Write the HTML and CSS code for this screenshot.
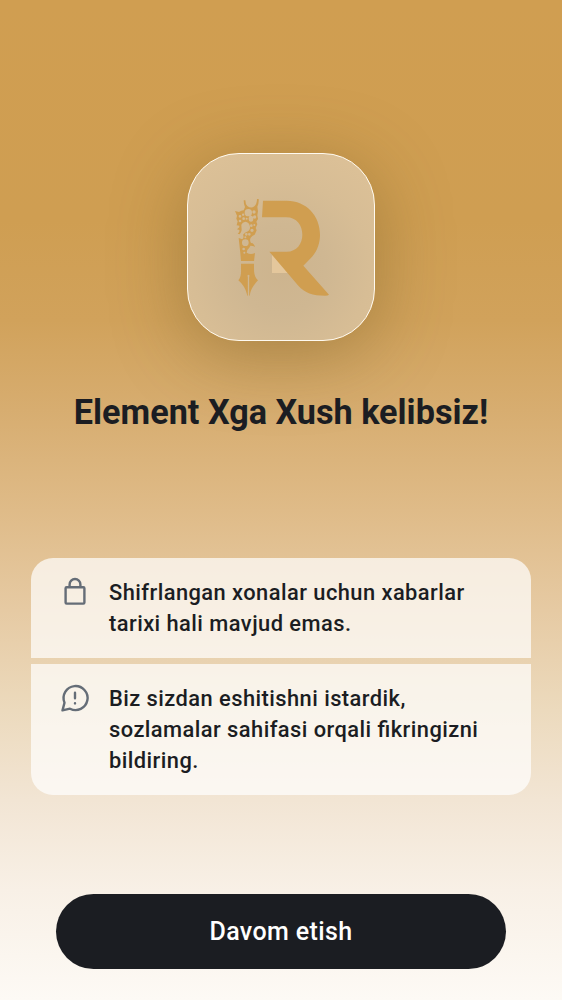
FILE: index.html
```html
<!DOCTYPE html>
<html lang="uz">
<head>
<meta charset="utf-8">
<title>Element X</title>
<link rel="stylesheet" href="styles.css">
</head>
<body>
<main class="screen">
  <div class="logo-tile">
    <svg class="logo" viewBox="171 159 564 564" aria-hidden="true">
      <path class="fold" d="M426 464V519H474V510Z"/>
      <path class="gold" d="M399 302H470C530 302 570 348 570 404C570 432 560 456 542 475L520 497L597 584Q594 587 585 587C548 587 524 578 505 557L418 455H470C500 455 517 431 517 404C517 376 500 352 469 352H396Z"/>
      <path class="gold" d="M333 491H372V506C372 524 376 532 384 541C369 557 362 570 359 587H357.500V530A3 3 0 1 0 353.500 530V587H352C347 567 341 556 325 541C332 532 334 521 333 506Z"/>
      <path class="gold" fill-rule="evenodd" d="M326 414L337 418Q343 412 339 404Q345 396 351 395Q361 391 360 380Q358 366 346 365Q337 367 334 374L335 390Q334 397 329 403L323 401Q330 396 328 390L321 388L328 382L328 377L320 376L323 364L319 356L321 347L315 333L327 336L334 332L341 331L345 321Q341 311 341 301H346Q346 312 352 318Q363 327 373 319Q381 312 381 297H386Q387 310 382 320L384 334L382 346L384 357L379 365L382 373L377 384L380 391L374 404Q366 407 362 413Q358 421 363 429L368 430Q374 435 375 441L369 438L361 437L358 443Q350 449 350 458Q362 466 375 459L372 483H333L331 460Z
        M344 338a11 11 0 1 0 22 0a11 11 0 1 0-22 0M356 356a7 9 0 1 0 14 0a7 9 0 1 0-14 0M367 336a5 5 0 1 0 10 0a5 5 0 1 0-10 0M369 351a5 5 0 1 0 10 0a5 5 0 1 0-10 0M336 344a3.500 3.500 0 1 0 7 0a3.500 3.500 0 1 0-7 0M326 349a4 4 0 1 0 8 0a4 4 0 1 0-8 0M347 356a3 3 0 1 0 6 0a3 3 0 1 0-6 0M326 363a4 4 0 1 0 8 0a4 4 0 1 0-8 0M337 356a4 4 0 1 0 8 0a4 4 0 1 0-8 0M360 377a4 4 0 1 0 8 0a4 4 0 1 0-8 0M370 375a3 3 0 1 0 6 0a3 3 0 1 0-6 0M361 391a5 5 0 1 0 10 0a5 5 0 1 0-10 0M345 403a4 4 0 1 0 8 0a4 4 0 1 0-8 0M354 403a4 4 0 1 0 8 0a4 4 0 1 0-8 0M343 412a3 3 0 1 0 6 0a3 3 0 1 0-6 0M336 428a10 10 0 1 0 20 0a10 10 0 1 0-20 0M337 447a4 4 0 1 0 8 0a4 4 0 1 0-8 0M340 458a3 3 0 1 0 6 0a3 3 0 1 0-6 0"/>
    </svg>
  </div>
  <h1 class="title">Element Xga Xush kelibsiz!</h1>
  <ul class="notes">
    <li class="note">
      <svg class="icon" viewBox="0 0 30 32" aria-hidden="true">
        <rect x="5.600" y="11.300" width="18.800" height="16.300" rx="1"/>
        <path d="M9.600 11.200V8.400a5.400 5.400 0 0 1 10.800 0V11.200"/>
      </svg>
      <p class="note-text">Shifrlangan xonalar uchun xabarlar tarixi hali mavjud emas.</p>
    </li>
    <li class="note">
      <svg class="icon" viewBox="0 0 30 32" aria-hidden="true">
        <path d="M4.500 20.700A12 12 0 1 1 10 26.700L2.500 28.400Z"/>
        <path class="mark" d="M15 10.800V16.300M15 21.300V21.400"/>
      </svg>
      <p class="note-text">Biz sizdan eshitishni istardik, sozlamalar sahifasi orqali fikringizni bildiring.</p>
    </li>
  </ul>
  <button class="continue" type="button">Davom etish</button>
</main>
</body>
</html>
```
FILE: styles.css
```css
* { box-sizing: border-box; }
body { margin: 0; font-family: Roboto, sans-serif; color: #1b1d22; }
.screen {
  height: 1000px;
  padding: 153px 31px 31px;
  display: flex;
  flex-direction: column;
  align-items: center;
  overflow: hidden;
  background: linear-gradient(#d09e51 0, #cf9e52 220px, #d1a25b 320px, #d7ad70 410px, #dfbb88 510px, #e6caa3 610px, #ecdabd 710px, #f2e5d4 800px, #f8f0e6 890px, #fdfaf5 1000px);
}
.logo-tile {
  flex: none;
  width: 188px;
  height: 188px;
  border: 1.500px solid #fffaf0;
  border-radius: 52px;
  background: radial-gradient(circle at 50% 62%, #cdb48e 0, #cfb792 30%, #d7bd95 60%, #dec298 100%);
  box-shadow: 0 13px 75px rgba(100, 80, 30, 0.4);
}
.logo { display: block; width: 188px; height: 188px; margin: -1px; }
.gold { fill: #d09e50; }
.fold { fill: #e4c79c; }
.title {
  margin: 49px 0 0;
  font-size: 34.200px;
  line-height: 44px;
  font-weight: 700;
  white-space: nowrap;
}
.notes {
  list-style: none;
  width: 100%;
  margin: 124px 0 0;
  padding: 0;
  display: grid;
  gap: 6px;
}
.note {
  display: flex;
  gap: 19px;
  padding: 18.500px 28px 19px 29px;
  background: rgba(255, 255, 255, 0.7);
}
.note:first-child { height: 100px; border-radius: 22px 22px 0 0; }
.note:last-child { height: 131px; border-radius: 0 0 22px 22px; }
.icon {
  flex: none;
  width: 30px;
  height: 32px;
  margin-top: -1px;
  fill: none;
  stroke: #656d77;
  stroke-width: 2.400;
  stroke-linejoin: round;
}
.mark { stroke-linecap: round; }
.note-text {
  margin: 0;
  font-size: 21.860px;
  line-height: 31.200px;
  font-weight: 500;
  letter-spacing: 0.450px;
  font-feature-settings: "liga" 1;
}
.continue {
  width: 450px;
  height: 75px;
  margin-top: auto;
  border: 0;
  border-radius: 38px;
  background: #1b1d22;
  color: #fff;
  font: 500 25px/31px Roboto, sans-serif;
  letter-spacing: 0.380px;
}
```
